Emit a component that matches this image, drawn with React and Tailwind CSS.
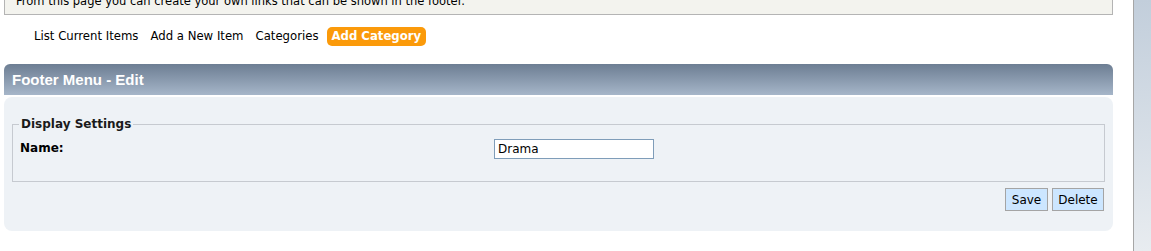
export default function App() {
  const v = { fontFamily: '"DejaVu Sans", Verdana, sans-serif' };
  const a = { fontFamily: '"Liberation Sans", Arial, sans-serif' };
  return (
    <div className="flex w-[1151px] h-[251px] overflow-hidden bg-white" style={v}>
      <div className="w-[1133px] shrink-0 pl-[4px] pr-[20px]">
        <div className="-mt-[12px] h-[27px] border border-[#b4b4b4] bg-[#f3f3ee] pl-[11px] text-[11.5px] leading-[25px] text-black">
          From this page you can create your own links that can be shown in the footer.
        </div>
        <div className="mt-[11px] flex items-center pl-[24px] text-[11.7px] text-black">
          <span className="px-[6px] leading-[20px]">List Current Items</span>
          <span className="px-[6px] leading-[20px]">Add a New Item</span>
          <span className="px-[6px] leading-[20px]">Categories</span>
          <span className="ml-[2px] rounded-[5px] bg-[#fb9a0a] px-[5px] font-bold leading-[19px] text-white">Add Category</span>
        </div>
        <div
          className="mt-[18px] h-[31px] rounded-t-[6px] bg-gradient-to-b from-[#6d7e93] to-[#a6b6c9] pl-[8px] text-[15px] font-bold leading-[31px] text-white"
          style={a}
        >
          Footer Menu - Edit
        </div>
        <div className="mt-[2px] h-[134px] rounded-[8px] bg-[#eef2f6] px-[8px] pt-[18px]">
          <fieldset className="h-[67px] border border-[#c6cad0] pl-[7px]">
            <legend className="-ml-[1px] px-[2px] text-[12px] font-bold text-[#1a1a1a]">Display Settings</legend>
            <div className="flex items-start pt-[4px]">
              <div className="w-[474px] pt-[3px] text-[12px] font-bold leading-[16px] text-black">Name:</div>
              <div className="mt-[2px] flex h-[20px] w-[160px] items-center border border-[#7f9db9] bg-white pl-[3px] text-[12px] text-black">
                Drama
              </div>
            </div>
          </fieldset>
          <div className="mt-[6px] flex justify-end gap-[4px] pr-[1px]">
            <button className="h-[23px] w-[43px] border border-[#a4a4a4] bg-[#cce6ff] text-[12px] text-black">Save</button>
            <button className="h-[23px] w-[52px] border border-[#a4a4a4] bg-[#cce6ff] text-[12px] text-black">Delete</button>
          </div>
        </div>
      </div>
      <div className="h-full w-[18px] shrink-0 border-l border-[#a6a6a6] bg-gradient-to-b from-[#c2cedb] to-[#e8ecf0]" />
    </div>
  );
}
